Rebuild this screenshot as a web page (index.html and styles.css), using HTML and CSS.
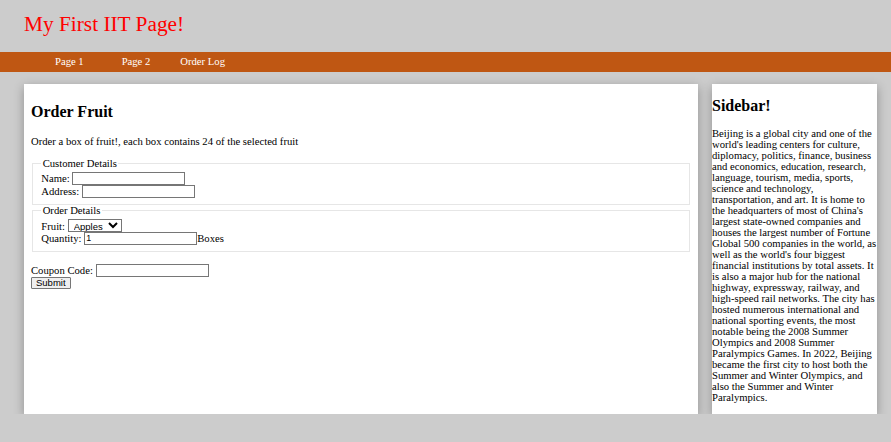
FILE: index.html
```html
<!DOCTYPE html>
<html lang="en">
<head>
    <meta charset="UTF-8">
    <meta name="viewport" content="width=device-width, initial-scale=1.0">
    <title>My First IIT Page!</title>
    <link rel="stylesheet" href="styles.css">
</head>
<body>
    <header class="site-header">
        <h1>My First IIT Page!</h1>
    </header>

    <nav class="site-nav">
        <a href="#">Page 1</a><a href="#">Page 2</a><a href="#">Order Log</a>
    </nav>

    <div class="layout">
        <main class="content">
            <h2>Order Fruit</h2>
            <p>Order a box of fruit!, each box contains 24 of the selected fruit</p>

            <form class="order-form">
                <fieldset>
                    <legend>Customer Details</legend>
                    Name: <input type="text" name="name"><br>
                    Address: <input type="text" name="address">
                </fieldset>

                <fieldset>
                    <legend>Order Details</legend>
                    Fruit: <select name="fruit">
                        <option>Apples</option>
                        <option>Oranges</option>
                        <option>Bananas</option>
                    </select><br>
                    Quantity: <input type="text" name="quantity" value="1">Boxes
                </fieldset>

                <div class="coupon">
                    Coupon Code: <input type="text" name="coupon"><br>
                    <button type="submit" class="submit-btn">Submit</button>
                </div>
            </form>
        </main>

        <aside class="sidebar">
            <h2>Sidebar!</h2>
            <p>Beijing is a global city and one of the world's leading centers for culture, diplomacy, politics, finance, business and economics, education, research, language, tourism, media, sports, science and technology, transportation, and art. It is home to the headquarters of most of China's largest state-owned companies and houses the largest number of Fortune Global 500 companies in the world, as well as the world's four biggest financial institutions by total assets. It is also a major hub for the national highway, expressway, railway, and high-speed rail networks. The city has hosted numerous international and national sporting events, the most notable being the 2008 Summer Olympics and 2008 Summer Paralympics Games. In 2022, Beijing became the first city to host both the Summer and Winter Olympics, and also the Summer and Winter Paralympics.</p>
        </aside>
    </div>
</body>
</html>
```

FILE: styles.css
```css
body {
    margin: 0;
    background-color: #cccccc;
    font-family: "Liberation Serif", "Times New Roman", serif;
    font-size: 10.667px;
    color: #000;
}

/* Header */
.site-header {
    padding: 12px 24px 15px;
}

.site-header h1 {
    margin: 0;
    font-size: 21.333px;
    font-weight: normal;
    color: #ff0000;
    line-height: 1.15;
}

/* Navigation bar */
.site-nav {
    height: 20px;
    line-height: 20px;
    background-color: #bf5713;
    padding-left: 36px;
}

.site-nav a {
    display: inline-block;
    width: 66.667px;
    text-align: center;
    color: #fff;
    text-decoration: none;
}

/* Main layout */
.layout {
    display: flex;
    align-items: stretch;
    gap: 14px;
    padding: 12px 14px 0 24px;
}

.content,
.sidebar {
    background-color: #fff;
    box-shadow: 0 3px 10px rgba(0, 0, 0, 0.3);
}

.content {
    flex: 1;
    padding: 6.5px 7px;
}

.sidebar {
    width: 165px;
    flex-shrink: 0;
}

h2 {
    font-size: 16px;
    margin: 13.333px 0;
}

.content h2 {
    margin-bottom: 14.5px;
}

p {
    margin: 10.667px 0;
}

.sidebar p {
    line-height: 11px;
    margin-bottom: 11px;
}

/* Order form */
fieldset {
    margin: 0 1.333px;
    padding: 3px 8px 6px;
    border: 1px solid #e6e6e6;
}

legend {
    padding: 0 1.333px;
}

input[type="text"],
select {
    box-sizing: border-box;
    height: 13px;
    padding: 0 1px;
    border: 1px solid #767676;
    border-radius: 0;
    font-family: "Liberation Sans", Arial, sans-serif;
    font-size: 8.9px;
    color: #000;
    background-color: #fff;
    vertical-align: baseline;
}

input[type="text"] {
    width: 113px;
}

select {
    width: 54px;
    font-size: 9.5px;
}

.coupon {
    margin-top: 12px;
}

.submit-btn {
    box-sizing: border-box;
    height: 12.5px;
    padding: 0 4px;
    border: 1px solid #767676;
    border-radius: 1px;
    background-color: #efefef;
    font-family: "Liberation Sans", Arial, sans-serif;
    font-size: 9.5px;
    line-height: 1;
}
```
